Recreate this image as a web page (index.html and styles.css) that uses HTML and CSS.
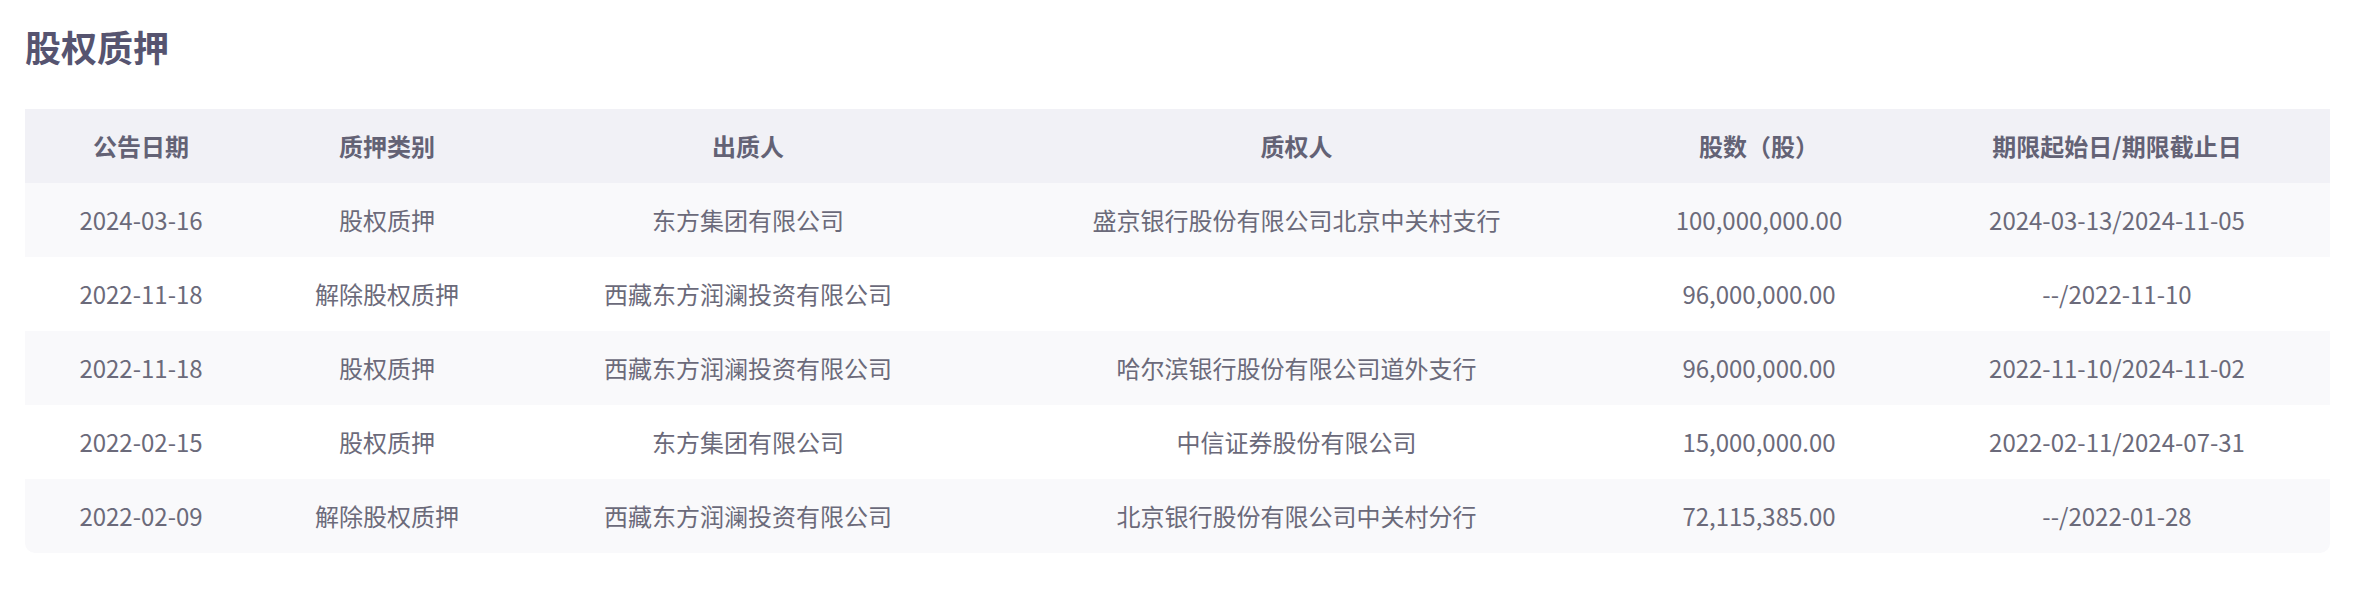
FILE: index.html
```html
<!DOCTYPE html>
<html lang="zh-CN">
<head>
<meta charset="utf-8">
<title>股权质押</title>
<link rel="stylesheet" href="styles.css">
</head>
<body>
<section class="pledge">
  <h2 class="pledge-title">股权质押</h2>
  <table class="pledge-table">
    <colgroup>
      <col class="col-date">
      <col class="col-type">
      <col class="col-pledgor">
      <col class="col-pledgee">
      <col class="col-shares">
      <col class="col-term">
    </colgroup>
    <thead>
      <tr>
        <th>公告日期</th>
        <th>质押类别</th>
        <th>出质人</th>
        <th>质权人</th>
        <th>股数（股）</th>
        <th>期限起始日/期限截止日</th>
      </tr>
    </thead>
    <tbody>
      <tr>
        <td>2024-03-16</td>
        <td>股权质押</td>
        <td>东方集团有限公司</td>
        <td>盛京银行股份有限公司北京中关村支行</td>
        <td>100,000,000.00</td>
        <td>2024-03-13/2024-11-05</td>
      </tr>
      <tr>
        <td>2022-11-18</td>
        <td>解除股权质押</td>
        <td>西藏东方润澜投资有限公司</td>
        <td></td>
        <td>96,000,000.00</td>
        <td>--/2022-11-10</td>
      </tr>
      <tr>
        <td>2022-11-18</td>
        <td>股权质押</td>
        <td>西藏东方润澜投资有限公司</td>
        <td>哈尔滨银行股份有限公司道外支行</td>
        <td>96,000,000.00</td>
        <td>2022-11-10/2024-11-02</td>
      </tr>
      <tr>
        <td>2022-02-15</td>
        <td>股权质押</td>
        <td>东方集团有限公司</td>
        <td>中信证券股份有限公司</td>
        <td>15,000,000.00</td>
        <td>2022-02-11/2024-07-31</td>
      </tr>
      <tr>
        <td>2022-02-09</td>
        <td>解除股权质押</td>
        <td>西藏东方润澜投资有限公司</td>
        <td>北京银行股份有限公司中关村分行</td>
        <td>72,115,385.00</td>
        <td>--/2022-01-28</td>
      </tr>
    </tbody>
  </table>
</section>
</body>
</html>
```
FILE: styles.css
```css
html, body {
  margin: 0;
  padding: 0;
  background: #ffffff;
}

body {
  font-family: "Noto Sans CJK SC", "Noto Sans", sans-serif;
  color: #6b6a7a;
}

.pledge {
  padding: 28px 0 0 25px;
}

.pledge-title {
  margin: 0 0 45px 0;
  font-size: 36px;
  line-height: 36px;
  font-weight: 700;
  color: #565470;
}

.pledge-table {
  width: 2305px;
  border-collapse: separate;
  border-spacing: 0;
  table-layout: fixed;
}

.col-date { width: 232px; }
.col-type { width: 260px; }
.col-pledgor { width: 462px; }
.col-pledgee { width: 635px; }
.col-shares { width: 290px; }
.col-term { width: 426px; }

.pledge-table th,
.pledge-table td {
  height: 74px;
  padding: 0;
  text-align: center;
  vertical-align: middle;
  font-size: 24px;
  line-height: 32px;
  white-space: nowrap;
}

.pledge-table th {
  background: #f1f1f6;
  color: #636275;
  font-weight: 700;
}

.pledge-table td {
  color: #6b6a7a;
  font-weight: 400;
}

.pledge-table tbody tr:nth-child(odd) td {
  background: #f9f9fb;
}

.pledge-table tbody tr:last-child td:first-child {
  border-bottom-left-radius: 10px;
}

.pledge-table tbody tr:last-child td:last-child {
  border-bottom-right-radius: 10px;
}
```
